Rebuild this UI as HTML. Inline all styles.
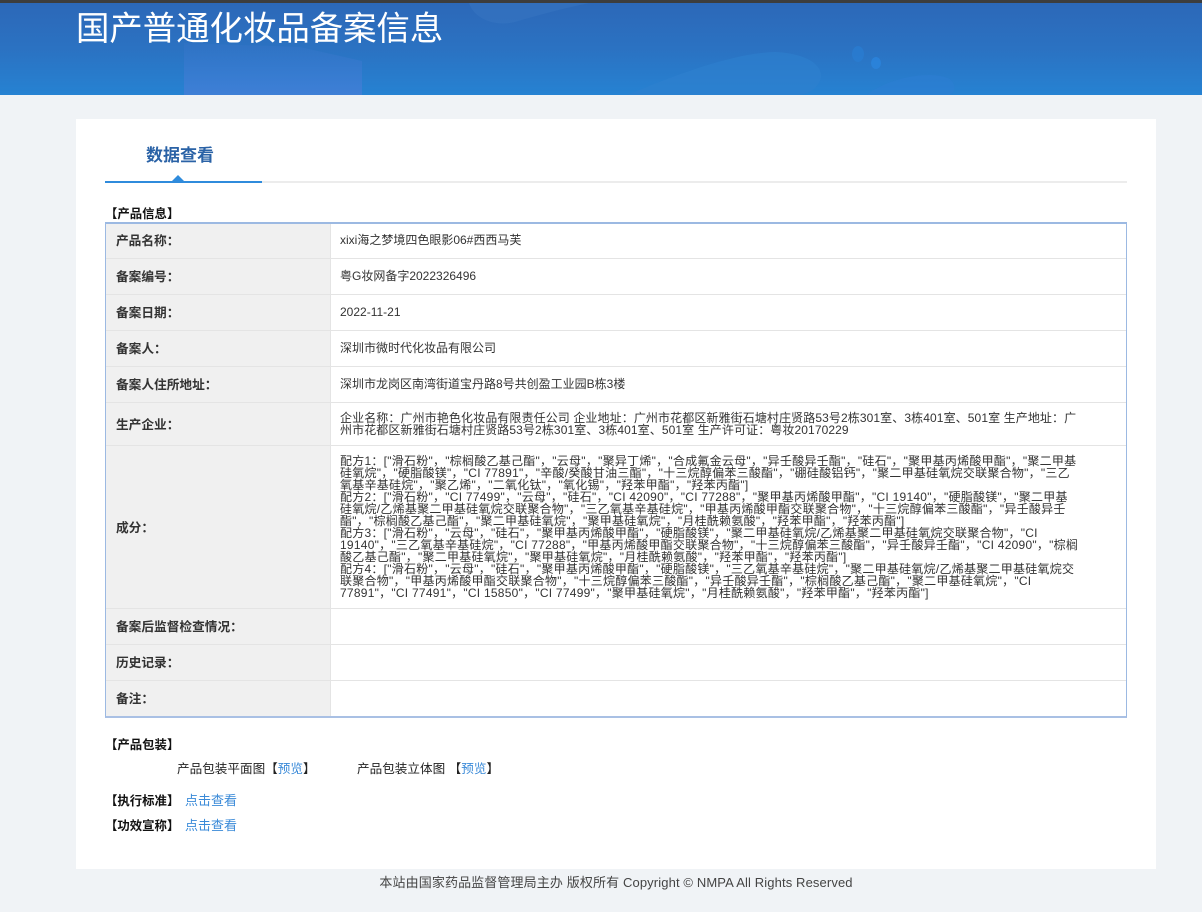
<!DOCTYPE html>
<html lang="zh-CN">
<head>
<meta charset="utf-8">
<title>国产普通化妆品备案信息</title>
<style>
html,body{margin:0;padding:0;width:1202px;height:912px;overflow:hidden;background:#f0f3f6;}
body{position:relative;font-family:"Liberation Sans","Noto Sans CJK SC","WenQuanYi Zen Hei",sans-serif;color:#333;font-size:13px;}
.a{position:absolute;white-space:nowrap;}
#top{left:0;top:0;width:1202px;height:3px;background:#3d3d3d;}
#hd{left:0;top:3px;width:1202px;height:92px;background:linear-gradient(180deg,#2c68b8 0%,#2b72c2 50%,#2682d2 100%);overflow:hidden;}
#title{left:76px;top:9px;font-size:33.4px;line-height:42px;color:#fff;}
#card{left:76px;top:119px;width:1080px;height:750px;background:#fff;}
#tab{left:146px;top:145px;font-size:17px;line-height:22px;font-weight:bold;color:#2a62a6;}
#ln{left:105px;top:181px;width:1022px;height:2px;background:#ececec;}
#ln2{left:105px;top:181px;width:157px;height:2px;background:#2f8bdc;}
#tri{left:172px;top:175px;width:0;height:0;border-left:6px solid transparent;border-right:6px solid transparent;border-bottom:6px solid #2f8bdc;}
.h{font-weight:bold;color:#111;font-size:12.4px;line-height:16px;}
#tb{left:105px;top:222px;width:1020px;height:492px;border:1px solid #9cb9e2;border-top:2px solid #9cb9e2;border-bottom:2px solid #a9c0e4;background:#fff;}
#lab{left:106px;top:224px;width:224px;height:492px;background:#f0f0f0;}
#sep{left:330px;top:224px;width:1px;height:492px;background:#e4e4e4;}
.r{left:106px;width:1020px;height:1px;background:#e4e4e4;}
.l{left:116px;font-weight:bold;font-size:12.7px;line-height:16px;color:#333;}
.v{left:340px;font-size:12px;line-height:16px;color:#333;}
.m{left:340px;font-size:12px;line-height:12px;color:#333;}
#foot{left:0;width:1232px;top:875px;text-align:center;font-size:13px;line-height:16px;color:#444;letter-spacing:.12px;}
.p{font-size:12.6px;line-height:16px;color:#222;}
.lnk{color:#3a8ad8;}
</style>
</head>
<body>
<div class="a" id="top"></div>
<div class="a" id="hd">
<svg width="1202" height="92" viewBox="0 0 1202 92" style="position:absolute;left:0;top:0">
<defs>
<linearGradient id="g" x1="0" y1="0" x2="0" y2="1"><stop offset="0" stop-color="#3a76cc" stop-opacity=".25"/><stop offset="1" stop-color="#3f7fd6"/></linearGradient>
</defs>
<path d="M184 92V40L300 44L362 58V92Z" fill="url(#g)"/>
<path d="M469 0C474 16 495 24 515 19C535 13 565 5 589 0Z" fill="#3a78c4" opacity=".45"/>
<path d="M627 92C680 70 735 50 775 49C805 50 826 62 820 78C816 86 810 90 800 92Z" fill="#2f80ce" opacity=".6"/>
<ellipse cx="858" cy="51" rx="6" ry="8" fill="#2a7dd3" opacity=".7"/>
<ellipse cx="876" cy="60" rx="5" ry="6" fill="#2a84dd" opacity=".8"/>
<path d="M867 92C885 76 930 66 950 76C956 82 956 88 950 92Z" fill="#2d7dd4" opacity=".5"/>
</svg>
</div>
<div class="a" id="title">国产普通化妆品备案信息</div>
<div class="a" id="card"></div>
<div class="a" id="tab">数据查看</div>
<div class="a" id="ln"></div>
<div class="a" id="ln2"></div>
<div class="a" id="tri"></div>
<div class="a h" style="left:105px;top:206px">【产品信息】</div>
<div class="a" id="tb"></div>
<div class="a" id="lab"></div>
<div class="a" id="sep"></div>
<div class="a r" style="top:258px"></div>
<div class="a r" style="top:294px"></div>
<div class="a r" style="top:330px"></div>
<div class="a r" style="top:366px"></div>
<div class="a r" style="top:402px"></div>
<div class="a r" style="top:445px"></div>
<div class="a r" style="top:608px"></div>
<div class="a r" style="top:644px"></div>
<div class="a r" style="top:680px"></div>
<div class="a l" style="top:233px">产品名称：</div>
<div class="a l" style="top:269px">备案编号：</div>
<div class="a l" style="top:305px">备案日期：</div>
<div class="a l" style="top:341px">备案人：</div>
<div class="a l" style="top:377px">备案人住所地址：</div>
<div class="a l" style="top:417px">生产企业：</div>
<div class="a l" style="top:520px">成分：</div>
<div class="a l" style="top:619px">备案后监督检查情况：</div>
<div class="a l" style="top:655px">历史记录：</div>
<div class="a l" style="top:691px">备注：</div>
<div class="a v" style="top:232px">xixi海之梦境四色眼影06#西西马芙</div>
<div class="a v" style="top:268px">粤G妆网备字2022326496</div>
<div class="a v" style="top:304px">2022-11-21</div>
<div class="a v" style="top:340px">深圳市微时代化妆品有限公司</div>
<div class="a v" style="top:376px">深圳市龙岗区南湾街道宝丹路8号共创盈工业园B栋3楼</div>
<div class="a m" style="top:412px;letter-spacing:.1px">企业名称：广州市艳色化妆品有限责任公司 企业地址：广州市花都区新雅街石塘村庄贤路53号2栋301室、3栋401室、501室 生产地址：广<br>州市花都区新雅街石塘村庄贤路53号2栋301室、3栋401室、501室 生产许可证：粤妆20170229</div>
<div class="a m" style="top:455px;letter-spacing:.25px">配方1：["滑石粉"，"棕榈酸乙基己酯"，"云母"，"聚异丁烯"，"合成氟金云母"，"异壬酸异壬酯"，"硅石"，"聚甲基丙烯酸甲酯"，"聚二甲基<br>硅氧烷"，"硬脂酸镁"，"CI 77891"，"辛酸/癸酸甘油三酯"，"十三烷醇偏苯三酸酯"，"硼硅酸铝钙"，"聚二甲基硅氧烷交联聚合物"，"三乙<br>氧基辛基硅烷"，"聚乙烯"，"二氧化钛"，"氧化锡"，"羟苯甲酯"，"羟苯丙酯"]<br>配方2：["滑石粉"，"CI 77499"，"云母"，"硅石"，"CI 42090"，"CI 77288"，"聚甲基丙烯酸甲酯"，"CI 19140"，"硬脂酸镁"，"聚二甲基<br>硅氧烷/乙烯基聚二甲基硅氧烷交联聚合物"，"三乙氧基辛基硅烷"，"甲基丙烯酸甲酯交联聚合物"，"十三烷醇偏苯三酸酯"，"异壬酸异壬<br>酯"，"棕榈酸乙基己酯"，"聚二甲基硅氧烷"，"聚甲基硅氧烷"，"月桂酰赖氨酸"，"羟苯甲酯"，"羟苯丙酯"]<br>配方3：["滑石粉"，"云母"，"硅石"，"聚甲基丙烯酸甲酯"，"硬脂酸镁"，"聚二甲基硅氧烷/乙烯基聚二甲基硅氧烷交联聚合物"，"CI<br>19140"，"三乙氧基辛基硅烷"，"CI 77288"，"甲基丙烯酸甲酯交联聚合物"，"十三烷醇偏苯三酸酯"，"异壬酸异壬酯"，"CI 42090"，"棕榈<br>酸乙基己酯"，"聚二甲基硅氧烷"，"聚甲基硅氧烷"，"月桂酰赖氨酸"，"羟苯甲酯"，"羟苯丙酯"]<br>配方4：["滑石粉"，"云母"，"硅石"，"聚甲基丙烯酸甲酯"，"硬脂酸镁"，"三乙氧基辛基硅烷"，"聚二甲基硅氧烷/乙烯基聚二甲基硅氧烷交<br>联聚合物"，"甲基丙烯酸甲酯交联聚合物"，"十三烷醇偏苯三酸酯"，"异壬酸异壬酯"，"棕榈酸乙基己酯"，"聚二甲基硅氧烷"，"CI<br>77891"，"CI 77491"，"CI 15850"，"CI 77499"，"聚甲基硅氧烷"，"月桂酰赖氨酸"，"羟苯甲酯"，"羟苯丙酯"]</div>
<div class="a h" style="left:105px;top:737px">【产品包装】</div>
<div class="a p" style="left:177px;top:761px;">产品包装平面图【<span class="lnk">预览</span>】</div>
<div class="a p" style="left:357px;top:761px;">产品包装立体图 【<span class="lnk">预览</span>】</div>
<div class="a h" style="left:105px;top:793px">【执行标准】</div>
<div class="a lnk" style="left:185px;top:793px;line-height:16px;">点击查看</div>
<div class="a h" style="left:105px;top:818px">【功效宣称】</div>
<div class="a lnk" style="left:185px;top:818px;line-height:16px;">点击查看</div>
<div class="a" id="foot">本站由国家药品监督管理局主办 版权所有 Copyright © NMPA All Rights Reserved</div>
</body>
</html>
